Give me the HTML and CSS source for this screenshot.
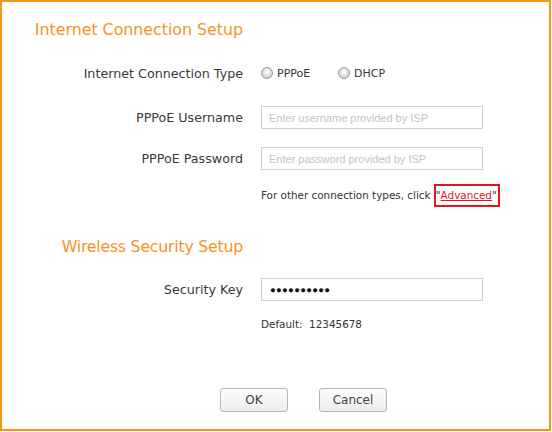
FILE: index.html
```html
<!DOCTYPE html>
<html>
<head>
<meta charset="utf-8">
<link rel="stylesheet" href="styles.css">
</head>
<body>
<div class="frame">
  <div class="row title-row r-title1"><h2 class="title">Internet Connection Setup</h2><div></div></div>
  <div class="row r-type">
    <div class="label">Internet Connection Type</div>
    <div class="field radios">
      <label class="radio"><span class="dot"></span>PPPoE</label>
      <label class="radio"><span class="dot"></span>DHCP</label>
    </div>
  </div>
  <div class="row r-user">
    <div class="label">PPPoE Username</div>
    <div class="field"><div class="input placeholder">Enter username provided by ISP</div></div>
  </div>
  <div class="row r-pass">
    <div class="label">PPPoE Password</div>
    <div class="field"><div class="input placeholder">Enter password provided by ISP</div></div>
  </div>
  <div class="row r-note">
    <div></div>
    <div class="field note">For other connection types, click <span class="adv">"<a href="#">Advanced</a>"</span></div>
  </div>
  <div class="row title-row r-title2"><h2 class="title">Wireless Security Setup</h2><div></div></div>
  <div class="row r-key">
    <div class="label">Security Key</div>
    <div class="field"><div class="input dots">●●●●●●●●●●</div></div>
  </div>
  <div class="row r-default">
    <div></div>
    <div class="field note">Default:&nbsp; 12345678</div>
  </div>
  <div class="buttons">
    <button class="btn">OK</button>
    <button class="btn">Cancel</button>
  </div>
</div>
</body>
</html>
```
FILE: styles.css
```css
html, body { margin: 0; padding: 0; background: #fff; }
body { font-family: "DejaVu Sans", Verdana, sans-serif; }
.frame {
  width: 551px; height: 431px; box-sizing: border-box;
  border: 2px solid #f7931e;
  display: flex; flex-direction: column;
}
.row {
  display: grid; grid-template-columns: 241px 222px; column-gap: 18px;
  align-items: center;
}
.title { margin: 0; font-weight: normal; font-size: 15.8px; color: #f7931e; text-align: right; }
.r-title2 .title { letter-spacing: -0.25px; }
.r-title1 { height: 24px; margin-top: 15px; }
.r-type { height: 24px; margin-top: 20px; }
.r-user { height: 23px; margin-top: 21px; }
.r-pass { height: 23px; margin-top: 18px; }
.r-note { height: 23px; margin-top: 14px; }
.r-title2 { height: 24px; margin-top: 27px; }
.r-key { height: 23px; margin-top: 20px; }
.r-default { height: 18px; margin-top: 14px; }
.label { text-align: right; font-size: 12.7px; color: #3a3a3a; }
.radios { display: flex; align-items: center; font-size: 11px; color: #333; }
.radio { display: flex; align-items: center; width: 77px; }
.dot {
  width: 10px; height: 10px; border-radius: 50%; border: 1px solid #9a9a9a;
  background: radial-gradient(circle at 50% 40%, #fff 0, #e4e4e4 45%, #b8b8b8 100%);
  margin-right: 4px; box-sizing: content-box;
}
.input {
  height: 23px; box-sizing: border-box; border: 1px solid #cfcfcf; background: #fff;
  display: flex; align-items: center; padding-left: 7px;
  font-family: "Liberation Sans", Arial, sans-serif; font-size: 11px;
}
.placeholder { color: #c4c4c4; }
.dots { color: #111; font-size: 9.5px; letter-spacing: 0.3px; padding-left: 8px; }
.note { font-size: 10.4px; color: #333; white-space: nowrap; }
.adv {
  display: inline-block; border: 2px solid #e8141b; padding: 3px 1px 4px 0; margin-left: 0;
}
.adv a { color: #e8141b; }
.buttons { display: flex; gap: 31px; margin-top: 55px; padding-left: 218px; }
.btn {
  width: 68px; height: 24px; box-sizing: border-box; border: 1px solid #b5b5b5; border-radius: 3px;
  background: linear-gradient(#fdfdfd, #ececec); font-family: "DejaVu Sans", Verdana, sans-serif;
  font-size: 12px; color: #444; padding: 0;
}
```
